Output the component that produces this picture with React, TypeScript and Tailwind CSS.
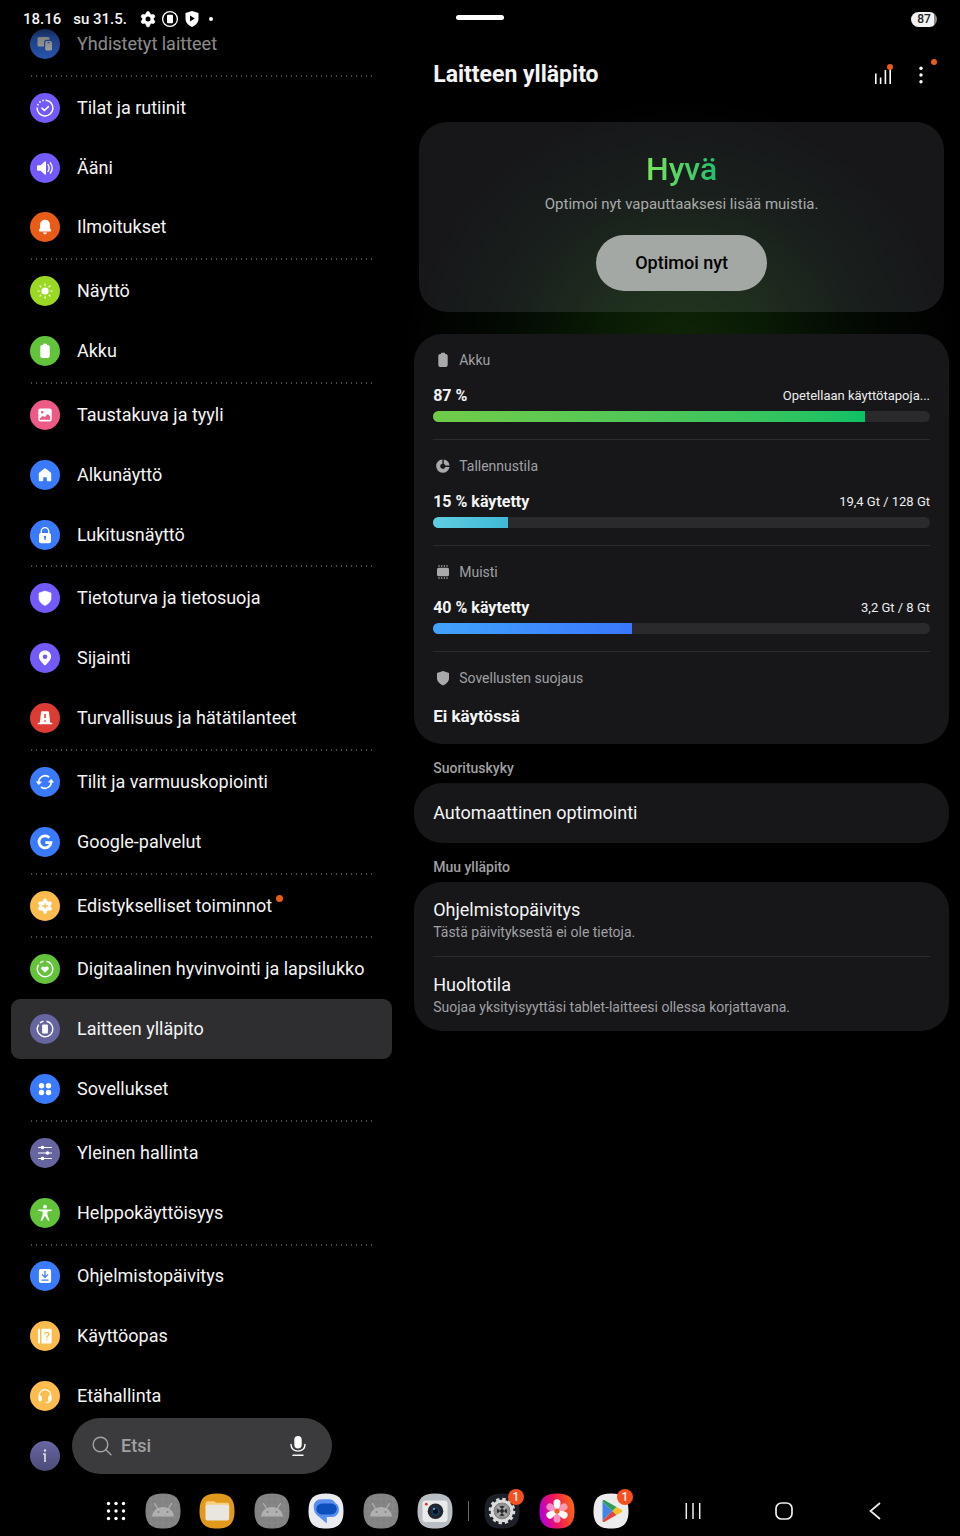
import type { ReactNode } from "react"

type MenuItem = {
    label: string;
    color: string;
    icon: ReactNode;
    badge?: boolean;
    active?: boolean;
}

const BLUE = "bg-[#3a7bfd]";
const PURPLE = "bg-[#735bfb]";
const GREEN = "bg-[#63c33b]";
const YELLOW = "bg-[#fdbc4e]";
const SLATE = "bg-[#6765a0]";

const GEAR = "M15 7.6a1.8 1.8 0 0 1 1.8 1.3l.4 1.1 1.2.7 1.2-.2a1.8 1.8 0 0 1 1.8 2.9l-.8.9v1.4l.8.9a1.8 1.8 0 0 1-1.8 2.9l-1.2-.2-1.2.7-.4 1.1a1.8 1.8 0 0 1-3.6 0l-.4-1.1-1.2-.7-1.2.2a1.8 1.8 0 0 1-1.8-2.9l.8-.9v-1.4l-.8-.9a1.8 1.8 0 0 1 1.8-2.9l1.2.2 1.2-.7.4-1.1A1.8 1.8 0 0 1 15 7.6z";
const SHIELD = "M15 8l6 2.1v5.2c0 3.4-2.6 5.6-6 7.2-3.4-1.6-6-3.8-6-7.2v-5.2z";
const BATTERY = "M13 7.8h4v1.3h.7a2 2 0 0 1 2 2v8.9a2 2 0 0 1-2 2h-5.4a2 2 0 0 1-2-2v-8.9a2 2 0 0 1 2-2h.7z";

const groups: MenuItem[][] = [
    [
        {
            label: "Yhdistetyt laitteet",
            color: BLUE,
            icon: (
                <g fill="#fff">
                    <path d="M9 8h9a1.5 1.5 0 0 1 1.5 1.5v1.3H17a3 3 0 0 0-3 3v3.7H9A1.5 1.5 0 0 1 7.5 16V9.5A1.5 1.5 0 0 1 9 8z" />
                    <rect x="15.2" y="12" width="6.8" height="9.5" rx="1.5" />
                    <path d="M17.6 13.7h2" stroke="#3a7bfd" />
                </g>
            )
        }
    ],
    [
        {
            label: "Tilat ja rutiinit",
            color: PURPLE,
            icon: (
                <g fill="none" stroke="#fff" strokeLinecap="round" strokeWidth="1.5">
                    <path d="M16 7.2A7.9 7.9 0 1 1 7.1 15" />
                    <path d="M7.9 11.6v.1M10 8.9v.1M13 7.4v.1" strokeWidth="1.7" />
                    <path d="M12 15.2l2.4 2.3 4-3.9" strokeWidth="1.6" strokeLinejoin="round" />
                </g>
            )
        },
        {
            label: "Ääni",
            color: PURPLE,
            icon: (
                <g>
                    <path d="M8 12.200h2.600l4.200-3.600c.6-.5 1.200-.2 1.200.5v11.800c0 .7-.6 1-1.200.5l-4.200-3.600H8a1 1 0 0 1-1-1v-3.600a1 1 0 0 1 1-1z" fill="#fff" />
                    <path d="M18 11.600c1.400 2 1.400 4.800 0 6.800M20.300 9.800c2.400 3.200 2.400 7.200 0 10.400" fill="none" stroke="#fff" strokeWidth="1.3" strokeLinecap="round" />
                </g>
            )
        },
        {
            label: "Ilmoitukset",
            color: "bg-[#e85c17]",
            icon: (
                <path d="M15 7.800c3 0 4.900 2.200 4.900 5v2.900l1.200 2.500c.3.600 0 1.200-.7 1.200H9.600c-.7 0-1-.6-.7-1.200l1.200-2.500v-2.900c0-2.800 1.900-5 4.900-5zM12.900 20.500h4.200c-.3 1.200-1 1.800-2.100 1.800s-1.800-.6-2.100-1.800z" fill="#fff" />
            )
        }
    ],
    [
        {
            label: "Näyttö",
            color: "bg-[#9bd824]",
            icon: (
                <g>
                    <circle cx="15" cy="15" r="3.6" fill="#fff" />
                    <path d="M15 8v1.200M15 20.800V22M8 15h1.200M20.800 15H22M10 10l.9.9M19.100 19.100l.9.900M10 20l.9-.9M19.100 10.900l.9-.9" stroke="#fff" strokeWidth="1.2" strokeLinecap="round" />
                </g>
            )
        },
        { label: "Akku", color: GREEN, icon: <path d={BATTERY} fill="#fff" /> }
    ],
    [
        {
            label: "Taustakuva ja tyyli",
            color: "bg-[#ec5a85]",
            icon: (
                <g>
                    <rect x="8.3" y="8.5" width="13.4" height="13" rx="2" fill="#fff" />
                    <circle cx="12.2" cy="12.2" r="1.2" fill="#ec5a85" />
                    <path d="M10 19.800v-1.600l2.800-2.500 1.900 1.600 3-3.300 2.500 2.300v3.500z" fill="#ec5a85" />
                </g>
            )
        },
        {
            label: "Alkunäyttö",
            color: BLUE,
            icon: (
                <path d="M14 8.700a1.600 1.600 0 0 1 2 0l4.600 3.700c.4.300.6.800.6 1.300v6.600c0 .6-.4 1-1 1h-2.400a1 1 0 0 1-1-1v-3.100h-3.600v3.100a1 1 0 0 1-1 1H9.800a1 1 0 0 1-1-1v-6.600c0-.5.2-1 .6-1.300z" fill="#fff" />
            )
        },
        {
            label: "Lukitusnäyttö",
            color: BLUE,
            icon: (
                <g>
                    <path d="M11.300 14v-2.700a3.700 3.700 0 0 1 7.400 0V14" fill="none" stroke="#fff" strokeWidth="1.4" />
                    <rect x="9" y="13" width="12" height="10.3" rx="2" fill="#fff" />
                    <path d="M15 17v3" stroke="#3a7bfd" strokeWidth="1.3" />
                    <circle cx="15" cy="17" r="1.2" fill="#3a7bfd" />
                </g>
            )
        }
    ],
    [
        { label: "Tietoturva ja tietosuoja", color: PURPLE, icon: <path d={SHIELD} fill="#fff" stroke="#fff" strokeLinejoin="round" strokeWidth=".6" /> },
        {
            label: "Sijainti",
            color: PURPLE,
            icon: (
                <path fillRule="evenodd" d="M15 7.600c3.500 0 6.100 2.600 6.100 6 0 3.600-3.500 6.300-5.400 8.500a.9.900 0 0 1-1.400 0c-1.900-2.200-5.400-4.900-5.400-8.500 0-3.400 2.600-6 6.100-6zm0 3.800a2.300 2.300 0 1 0 0 4.600 2.300 2.300 0 0 0 0-4.600z" fill="#fff" />
            )
        },
        {
            label: "Turvallisuus ja hätätilanteet",
            color: "bg-[#dd3c35]",
            icon: (
                <g>
                    <path d="M12.300 8.200h5.400c.7 0 1.200.4 1.300 1.100l1.200 10.400h1.300c.5 0 .8.400.8.800v.8H7.700v-.8c0-.4.300-.8.800-.8h1.300L11 9.300c.1-.7.6-1.100 1.300-1.100z" fill="#fff" />
                    <path d="M15 11v4.200M15 17.200v1.500" stroke="#dd3c35" strokeWidth="1.5" />
                </g>
            )
        }
    ],
    [
        {
            label: "Tilit ja varmuuskopiointi",
            color: BLUE,
            icon: (
                <g fill="none" stroke="#fff" strokeWidth="1.6" strokeLinecap="round">
                    <path d="M8.800 15.500A6.400 6.400 0 0 1 18.600 9.700M21.200 14.500A6.400 6.400 0 0 1 11.400 20.300" />
                    <path d="M6.800 15l2 2.600 2.400-2.400zM18.800 14.800l2.400-2.400 2 2.600z" fill="#fff" strokeWidth=".8" strokeLinejoin="round" />
                </g>
            )
        },
        {
            label: "Google-palvelut",
            color: BLUE,
            icon: <path d="M19.300 10.700A6 6 0 1 0 20.900 15.700H15.300" fill="none" stroke="#fff" strokeWidth="2.8" />
        }
    ],
    [
        {
            label: "Edistykselliset toiminnot",
            color: YELLOW,
            badge: true,
            icon: (
                <g>
                    <path d={GEAR} fill="#fff" />
                    <path d="M15 12.200v5.600M12.200 15h5.600" stroke="#fdbc4e" strokeWidth="1.3" />
                </g>
            )
        }
    ],
    [
        {
            label: "Digitaalinen hyvinvointi ja lapsilukko",
            color: GREEN,
            icon: (
                <g>
                    <path d="M16.500 7.300a7.800 7.800 0 1 1-7.900 3.300M10 9a7.800 7.800 0 0 1 3.500-1.700" fill="none" stroke="#fff" strokeWidth="1.4" />
                    <path d="M15 18.800l-3.300-3.200c-1.600-1.700.7-4.600 3.300-2.400 2.600-2.200 4.900.7 3.300 2.400z" fill="#fff" />
                </g>
            )
        },
        {
            label: "Laitteen ylläpito",
            color: SLATE,
            active: true,
            icon: (
                <g>
                    <path d="M16.500 7.300a7.800 7.800 0 1 1-7.900 3.300M10 9a7.800 7.800 0 0 1 3.500-1.700" fill="none" stroke="#fff" strokeWidth="1.4" />
                    <rect x="12.1" y="10.6" width="5.8" height="8.8" rx="1" fill="#fff" />
                </g>
            )
        },
        {
            label: "Sovellukset",
            color: BLUE,
            icon: (
                <g fill="#fff">
                    <circle cx="11.5" cy="11.7" r="2.7" />
                    <circle cx="18.5" cy="11.7" r="2.7" />
                    <circle cx="11.5" cy="18.5" r="2.7" />
                    <circle cx="18.5" cy="18.5" r="2.7" />
                </g>
            )
        }
    ],
    [
        {
            label: "Yleinen hallinta",
            color: SLATE,
            icon: (
                <g fill="#fff" stroke="#fff" strokeWidth="1.2" strokeLinecap="round">
                    <path d="M8.500 9.500h13M8.500 15h13M8.500 20.500h13" />
                    <circle cx="12.5" cy="9.5" r="1.2" />
                    <circle cx="17.5" cy="15" r="1.2" />
                    <circle cx="12.5" cy="20.5" r="1.2" />
                </g>
            )
        },
        {
            label: "Helppokäyttöisyys",
            color: GREEN,
            icon: (
                <g fill="#fff">
                    <circle cx="15" cy="8.7" r="1.9" />
                    <path d="M8.600 11.500h12.800c.7 0 .7 1.400 0 1.500l-4 .5v3.200l1.900 5.300c.3.900-1.100 1.300-1.500.5L15 17.800l-2.800 4.700c-.4.800-1.800.4-1.500-.5l1.900-5.300v-3.200l-4-.5c-.7-.1-.7-1.500 0-1.500z" />
                </g>
            )
        }
    ],
    [
        {
            label: "Ohjelmistopäivitys",
            color: BLUE,
            icon: (
                <g>
                    <rect x="8.9" y="8" width="12.2" height="14" rx="2" fill="#fff" />
                    <path d="M15 10v6M12 13.400l3 3 3-3M11.500 19.200h7" fill="none" stroke="#3a7bfd" strokeWidth="1.3" />
                </g>
            )
        },
        {
            label: "Käyttöopas",
            color: YELLOW,
            icon: (
                <g>
                    <path d="M8 9.300c0-.8.500-1.500 1.300-1.500h.7v14.700h-.7c-.8 0-1.300-.7-1.300-1.500zM11.500 7.800h8.700c.9 0 1.500.7 1.500 1.500V21c0 .8-.6 1.500-1.500 1.500h-8.700z" fill="#fff" />
                    <path d="M14.500 13.300c0-2.600 4.300-2.500 4.300.1 0 1.600-2.100 1.600-2.100 3.300M16.700 18.300v1.300" fill="none" stroke="#fdbc4e" strokeWidth="1.3" />
                </g>
            )
        },
        {
            label: "Etähallinta",
            color: YELLOW,
            icon: (
                <g>
                    <path d="M9.200 17v-2.500a5.800 5.800 0 0 1 11.600 0V17c0 3.400-1.600 4.700-4.500 4.700" fill="none" stroke="#fff" strokeWidth="1.3" strokeLinecap="round" />
                    <rect x="8.6" y="14.5" width="3.2" height="6" rx="1.4" fill="#fff" />
                    <rect x="18.2" y="14.5" width="3.2" height="6" rx="1.4" fill="#fff" />
                </g>
            )
        },
        {
            label: "Tietoja tabletista",
            color: "bg-linear-to-b from-[#6866a2] to-[#4c4b78]",
            icon: (
                <g>
                    <circle cx="15" cy="9.5" r="1.2" fill="#ddd" />
                    <path d="M13.200 13.100H15V21" fill="none" stroke="#ddd" strokeWidth="1.7" />
                </g>
            )
        }
    ]
];

const stats = [
    {
        title: "Akku",
        value: "87 %",
        note: "Opetellaan käyttötapoja...",
        percent: 87,
        fill: "bg-linear-to-r from-[#70cc48] to-[#0cc165]",
        icon: <path d={BATTERY} />
    },
    {
        title: "Tallennustila",
        value: "15 % käytetty",
        note: "19,4 Gt / 128 Gt",
        percent: 15,
        fill: "bg-linear-to-r from-[#5fcde2] to-[#3fb9d6]",
        icon: <path d="M14.400 8.400v4.300a2.600 2.600 0 1 0 2.900 3.200h4.200A6.700 6.700 0 1 1 14.400 8.400zM15.800 8.400a6.700 6.700 0 0 1 5.700 6h-4.200a2.600 2.600 0 0 0-1.500-1.600z" />
    },
    {
        title: "Muisti",
        value: "40 % käytetty",
        note: "3,2 Gt / 8 Gt",
        percent: 40,
        fill: "bg-linear-to-r from-[#42a2ff] to-[#3a77fb]",
        icon: (
            <>
                <rect x="9" y="10.8" width="12" height="8.4" rx="1.5" />
                <path d="M11 8v1.800M13.700 8v1.800M16.300 8v1.800M19 8v1.800M11 20.200V22M13.700 20.200V22M16.300 20.200V22M19 20.200V22" stroke="#a9a9ad" strokeWidth="1" />
            </>
        )
    }
];

const AppTile = ({ fill, children }: { fill: string, children: ReactNode }) => (
    <svg viewBox="0 0 36 36" className="size-9">
        <path d="M18 .5c12.500 0 17.500 5 17.500 17.500S30.500 35.500 18 35.500.5 30.500.5 18 5.500.5 18 .5z" fill={fill} />
        {children}
    </svg>
)

const AndroidIcon = () => (
    <AppTile fill="#828282">
        <path d="M6 4v28M12 1.500v33M18 1v34M24 1.500v33M30 4v28M4 6h28M1.500 12h33M1 18h34M1.500 24h33M4 30h28" stroke="#8d8d8d" strokeWidth=".6" />
        <path d="M7 23.500c.5-5.500 5-9.500 11-9.500s10.500 4 11 9.500z" fill="#b0b0b0" />
        <path d="M12.500 15.500l-3-5M23.500 15.500l3-5" stroke="#b0b0b0" strokeWidth="1.3" strokeLinecap="round" />
        <circle cx="13.5" cy="19" r="1" fill="#808080" />
        <circle cx="22.5" cy="19" r="1" fill="#808080" />
    </AppTile>
)

const FilesIcon = () => (
    <AppTile fill="#e0981d">
        <path d="M6.500 10c0-1 .7-1.700 1.700-1.700h7l2.300 1.500h11c1 0 1.700.7 1.700 1.700v4H6.500z" fill="#f5cf7c" />
        <rect x="6.5" y="11.8" width="23.7" height="15.7" rx="2" fill="#e9e6df" />
    </AppTile>
)

const MessagesIcon = () => (
    <AppTile fill="#e9ebee">
        <path d="M13 6.300h8c3.500 0 5.500 1.700 6.500 4 5.500 2.500 4.500 13.400-3 13.700h-5.300c-.2 0-.4.2-.4.400v6.100L11.300 24C7.500 21.500 5.700 18.500 5.700 14c0-4.500 3-7.700 7.300-7.700z" fill="#5a8df0" />
        <rect x="8.3" y="10.6" width="20.5" height="10.8" rx="5.4" fill="#0c4fbd" />
    </AppTile>
)

const CameraIcon = () => (
    <AppTile fill="#b9bec4">
        <rect x="5.5" y="7.5" width="25" height="21.5" rx="3" fill="#e8eaec" />
        <circle cx="9.3" cy="11.2" r="1.4" fill="#e0342b" />
        <circle cx="18.5" cy="18.3" r="7.8" fill="#22262c" />
        <circle cx="18.5" cy="18.3" r="4.6" fill="#12395c" />
        <circle cx="18.5" cy="18.3" r="2.5" fill="#05090f" />
        <circle cx="17" cy="16" r="1" fill="#8fb8cf" />
    </AppTile>
)

const SettingsIcon = () => (
    <AppTile fill="#1d2029">
        <circle cx="18" cy="18" r="11.5" fill="none" stroke="#d8d8d8" strokeWidth="3.6" strokeDasharray="3.2 2.820" />
        <circle cx="18" cy="18" r="9.8" fill="#26282c" stroke="#dcdcdc" strokeWidth="3" />
        <circle cx="18" cy="18" r="6.6" fill="none" stroke="#8f8f8f" strokeWidth="3.2" />
        <path d="M13 13l10 10M23 13L13 23" stroke="#a5a5a5" strokeWidth="2.6" />
        <circle cx="18" cy="18" r="2" fill="#26282c" />
    </AppTile>
)

const GalleryIcon = () => (
    <AppTile fill="url(#gallery)">
        <defs>
            <linearGradient id="gallery" x1="0" y1=".6" x2="1" y2=".4">
                <stop offset="0" stopColor="#b400e0" />
                <stop offset=".45" stopColor="#f0145a" />
                <stop offset="1" stopColor="#f86a12" />
            </linearGradient>
        </defs>
        {[0, 120, 240].map((angle) => (
            <g key={angle} transform={`rotate(${angle} 18 18)`}>
                <path d="M17 18c-1-3-2.500-5-2.500-8.200a3.500 3.500 0 0 1 7 0c0 3.200-1.500 5.200-2.500 8.200z" fill="#fff" />
                <path d="M17 18c-1 3-2.500 5-2.500 8.200a3.500 3.500 0 0 0 7 0c0-3.200-1.500-5.200-2.500-8.200z" fill="#ffc2e4" fillOpacity=".7" />
            </g>
        ))}
        <circle cx="18" cy="18" r="2.6" fill="#f0601c" />
    </AppTile>
)

const PlayIcon = () => (
    <AppTile fill="#ececec">
        <path d="M9.500 8.500v19L19.500 18z" fill="#4285ea" />
        <path d="M9.500 8.500c0-1.500 1-2 2.200-1.300L23.500 14l-4 4z" fill="#2f9e52" />
        <path d="M9.500 27.500c0 1.500 1 2 2.200 1.300L23.500 22l-4-4z" fill="#e2483b" />
        <path d="M23.500 14l5 2.800c1 .6 1 1.800 0 2.400l-5 2.800-4-4z" fill="#f6bd23" />
    </AppTile>
)

const dockApps = [
    { name: "Sovellus 1", icon: <AndroidIcon /> },
    { name: "Omat tiedostot", icon: <FilesIcon /> },
    { name: "Sovellus 2", icon: <AndroidIcon /> },
    { name: "Messages", icon: <MessagesIcon /> },
    { name: "Sovellus 3", icon: <AndroidIcon /> },
    { name: "Kamera", icon: <CameraIcon /> }
];

const recentApps = [
    { name: "Asetukset", icon: <SettingsIcon />, count: 1 },
    { name: "Galleria", icon: <GalleryIcon />, count: 0 },
    { name: "Play Kauppa", icon: <PlayIcon />, count: 1 }
];

const StatusBar = () => (
    <header className="relative z-20 grid h-[38px] shrink-0 grid-cols-[1fr_auto_1fr] items-center px-[23px]">
        <div className="flex items-center text-[15px] font-medium">
            <span>18.16</span>
            <span className="ml-3">su 31.5.</span>
            <div className="ml-3 flex items-center gap-1">
                <svg viewBox="6 6 18 18" className="size-[18px]">
                    <path d={GEAR} fill="#fff" stroke="#fff" strokeWidth=".6" />
                    <circle cx="15" cy="15" r="2.5" fill="#000" />
                </svg>
                <svg viewBox="0 0 18 18" className="size-[18px]">
                    <circle cx="9" cy="9" r="7.4" fill="none" stroke="#fff" strokeWidth="1.3" />
                    <rect x="6" y="4.8" width="6" height="8.4" rx="1" fill="#fff" />
                </svg>
                <svg viewBox="0 0 18 18" className="size-[18px]">
                    <path d="M9 1l6.500 2v5.500c0 4-2.500 6.500-6.500 8.500-4-2-6.500-4.500-6.500-8.500V3z" fill="#fff" />
                    <path d="M7 5.500v6l4.800-3z" fill="#000" />
                </svg>
                <span className="ml-1 size-1 rounded-full bg-white" />
            </div>
        </div>
        <span className="h-[5px] w-12 -translate-y-0.5 rounded-full bg-white" />
        <span className="h-[15px] w-[26px] justify-self-end rounded-full bg-linear-to-r from-[#f2f2f2] from-87% to-[#8a8a8a] to-87% text-center text-xs leading-[15px] font-medium text-[#222]">87</span>
    </header>
)

const MenuRow = ({ label, color, icon, badge, active }: MenuItem) => (
    <li className="flex min-h-12 flex-1">
        <a
            href="#"
            aria-current={active ? "page" : undefined}
            className={`flex flex-1 items-center gap-[17px] rounded-[9px] pl-[19px] ${active ? "bg-[#2e2e31]" : ""}`}
        >
            <span className={`size-[30px] shrink-0 rounded-full ${color}`}>
                <svg viewBox="0 0 30 30">{icon}</svg>
            </span>
            <span className="flex gap-1 text-lg whitespace-nowrap">
                {label}
                {badge && <span className="mt-[3px] size-[7px] rounded-full bg-[#e85c17]" />}
            </span>
        </a>
    </li>
)

const Sidebar = () => (
    <aside className="relative -mt-6 flex w-[42%] shrink-0 flex-col px-[11px]">
        <nav className="flex flex-1 flex-col">
            {groups.map((group, index) => (
                <div key={index} className="contents">
                    {index > 0 && (
                        <div className="mr-[18px] ml-[18px] h-1 shrink-0 bg-[radial-gradient(circle,#4c4c4c_1px,transparent_1px)] bg-[length:5px_4px]" />
                    )}
                    <ul className="contents">
                        {group.map((item) => (
                            <MenuRow key={item.label} {...item} />
                        ))}
                    </ul>
                </div>
            ))}
        </nav>
        <div className="pointer-events-none absolute inset-x-0 top-0 h-[46px] bg-linear-to-b from-black via-black/50 to-black/30" />
        <label className="absolute bottom-3 left-[72px] flex h-14 w-[260px] items-center rounded-full bg-[#3b3b3d] pr-6 pl-5">
            <svg viewBox="0 0 20 20" className="size-5 shrink-0" fill="none" stroke="#a5a5a8" strokeWidth="1.4" strokeLinecap="round">
                <circle cx="8.5" cy="8.5" r="7.3" />
                <path d="M13.800 13.800l5.200 5" />
            </svg>
            <input type="search" aria-label="Etsi" placeholder="Etsi" className="ml-[9px] min-w-0 flex-1 bg-transparent text-lg font-medium outline-none placeholder:text-[#a0a0a3]" />
            <button type="button" aria-label="Puhehaku">
                <svg viewBox="0 0 20 22" className="h-[22px] w-5">
                    <rect x="6.3" y="1" width="7.4" height="12.5" rx="3.7" fill="#fff" />
                    <path d="M3 9.500c0 8.800 14 8.800 14 0M5 20.200h10" fill="none" stroke="#fff" strokeWidth="1.4" strokeLinecap="round" />
                </svg>
            </button>
        </label>
    </aside>
)

const StatIcon = ({ children }: { children: ReactNode }) => (
    <svg viewBox="5 5 20 20" className="size-5" fill="#a9a9ad">{children}</svg>
)

const Details = () => (
    <main className="relative min-w-0 flex-1 px-[11px]">
        <div className="pointer-events-none absolute inset-x-0 top-10 h-[500px] bg-[radial-gradient(ellipse_50%_50%_at_50%_54%,#0f2606_0%,#091a05_30%,#030903_65%,transparent_100%)]" />
        <div className="relative">
            <div className="flex h-[74px] items-center justify-between pr-[18px] pl-[19px]">
                <h1 className="text-[23px] leading-8 font-bold">Laitteen ylläpito</h1>
                <div className="flex items-center gap-[18px]">
                    <button type="button" aria-label="Käyttötilasto" className="relative">
                        <svg viewBox="0 0 20 20" className="size-5" stroke="#fff" strokeWidth="1.6">
                            <path d="M2.800 8.500V19M7.600 12.500V19M12.400 5V19M17.200 3V19" />
                        </svg>
                        <span className="absolute -top-px right-0 size-[6px] rounded-full bg-[#e85c17]" />
                    </button>
                    <button type="button" aria-label="Lisää vaihtoehtoja" className="relative">
                        <svg viewBox="0 0 20 20" className="size-5" fill="#fff">
                            <circle cx="10" cy="3.2" r="1.7" />
                            <circle cx="10" cy="10" r="1.7" />
                            <circle cx="10" cy="16.8" r="1.7" />
                        </svg>
                        <span className="absolute -top-[6px] -right-[6px] size-[6px] rounded-full bg-[#e85c17]" />
                    </button>
                </div>
            </div>

            <section className="mx-[5px] mt-[10px] flex flex-col items-center rounded-[28px] bg-[#e6e6ff]/10 pt-[27px] pb-[21px]">
                <h2 className="bg-linear-to-r from-[#78e45c] to-[#1cc06c] bg-clip-text text-[32px] leading-10 font-medium text-transparent">Hyvä</h2>
                <p className="mt-[5px] text-[15px] leading-5 text-[#a9abaa]">Optimoi nyt vapauttaaksesi lisää muistia.</p>
                <button type="button" className="mt-[21px] h-14 w-[171px] rounded-full bg-[#a3a8a4] text-lg font-medium text-black">Optimoi nyt</button>
            </section>

            <section className="mt-[22px] rounded-[28px] bg-[#17171a] px-[19px]">
                {stats.map((stat) => (
                    <div key={stat.title} className="border-b border-[#2b2b2e] pt-4 pb-[17px]">
                        <h3 className="flex h-5 items-center gap-[6px] text-sm text-[#a0a0a4]">
                            <StatIcon>{stat.icon}</StatIcon>
                            {stat.title}
                        </h3>
                        <div className="mt-[14px] flex h-6 items-center justify-between">
                            <span className="text-base font-bold">{stat.value}</span>
                            <span className="text-[13px] leading-5 text-[#ededed]">{stat.note}</span>
                        </div>
                        <div className="mt-[3px] h-[11px] overflow-hidden rounded-full bg-[#2a2a2c]">
                            <div className={`h-full ${stat.fill}`} style={{ width: `${stat.percent}%` }} />
                        </div>
                    </div>
                ))}
                <div className="pt-4 pb-4">
                    <h3 className="flex h-5 items-center gap-[6px] text-sm text-[#a0a0a4]">
                        <StatIcon><path d={SHIELD} /></StatIcon>
                        Sovellusten suojaus
                    </h3>
                    <p className="mt-4 text-[17px] leading-6 font-bold">Ei käytössä</p>
                </div>
            </section>

            <h3 className="mt-[14px] mb-[5px] pl-[19px] text-sm font-medium text-[#a0a0a4]">Suorituskyky</h3>
            <a href="#" className="flex h-[60px] items-center rounded-[28px] bg-[#17171a] px-[19px] text-lg">Automaattinen optimointi</a>

            <h3 className="mt-[14px] mb-[5px] pl-[19px] text-sm font-medium text-[#a0a0a4]">Muu ylläpito</h3>
            <section className="rounded-[28px] bg-[#17171a] px-[19px]">
                <a href="#" className="block border-b border-[#2b2b2e] pt-4 pb-[14px]">
                    <span className="block text-lg leading-6">Ohjelmistopäivitys</span>
                    <span className="block text-sm text-[#a0a0a4]">Tästä päivityksestä ei ole tietoja.</span>
                </a>
                <a href="#" className="block pt-4 pb-[14px]">
                    <span className="block text-lg leading-6">Huoltotila</span>
                    <span className="block text-sm text-[#a0a0a4]">Suojaa yksityisyyttäsi tablet-laitteesi ollessa korjattavana.</span>
                </a>
            </section>
        </div>
    </main>
)

const Dock = () => (
    <footer className="flex h-[50px] shrink-0 items-center pl-[106px]">
        <button type="button" aria-label="Kaikki sovellukset">
            <svg viewBox="0 0 20 20" className="size-5" fill="#fff">
                {[2.5, 10, 17.5].map((x) => [2.5, 10, 17.5].map((y) => <circle key={`${x}-${y}`} cx={x} cy={y} r="1.7" />))}
            </svg>
        </button>
        <div className="ml-[19px] flex w-[308px] justify-between">
            {dockApps.map((app) => (
                <button key={app.name} type="button" aria-label={app.name}>{app.icon}</button>
            ))}
        </div>
        <span className="mx-[15px] h-5 w-px bg-[#6a6a6a]" />
        <div className="flex w-[145px] justify-between">
            {recentApps.map((app) => (
                <button key={app.name} type="button" aria-label={app.name} className="relative">
                    {app.icon}
                    {app.count > 0 && (
                        <span className="absolute -top-1 -right-1 size-4 rounded-full bg-[#f4511e] text-center text-xs leading-4 font-medium">{app.count}</span>
                    )}
                </button>
            ))}
        </div>
        <div className="ml-[18px] grid w-[273px] grid-cols-3 justify-items-center">
            <button type="button" aria-label="Viimeisimmät">
                <svg viewBox="0 0 20 20" className="size-5" stroke="#eee" strokeWidth="1.5">
                    <path d="M3.300 2v16M10 2v16M16.700 2v16" />
                </svg>
            </button>
            <button type="button" aria-label="Alkunäyttö">
                <svg viewBox="0 0 20 20" className="size-5" fill="none" stroke="#eee" strokeWidth="1.7">
                    <rect x="2" y="2" width="16" height="16" rx="5.5" />
                </svg>
            </button>
            <button type="button" aria-label="Takaisin">
                <svg viewBox="0 0 20 20" className="size-5" fill="none" stroke="#eee" strokeWidth="1.7">
                    <path d="M15 2l-9.500 8 9.500 8" />
                </svg>
            </button>
        </div>
    </footer>
)

export default function App() {
    return (
        <div className="flex min-h-screen flex-col overflow-hidden bg-black font-['Roboto',sans-serif] text-[#f4f4f4]">
            <StatusBar />
            <div className="flex flex-1">
                <Sidebar />
                <Details />
            </div>
            <Dock />
        </div>
    );
}
